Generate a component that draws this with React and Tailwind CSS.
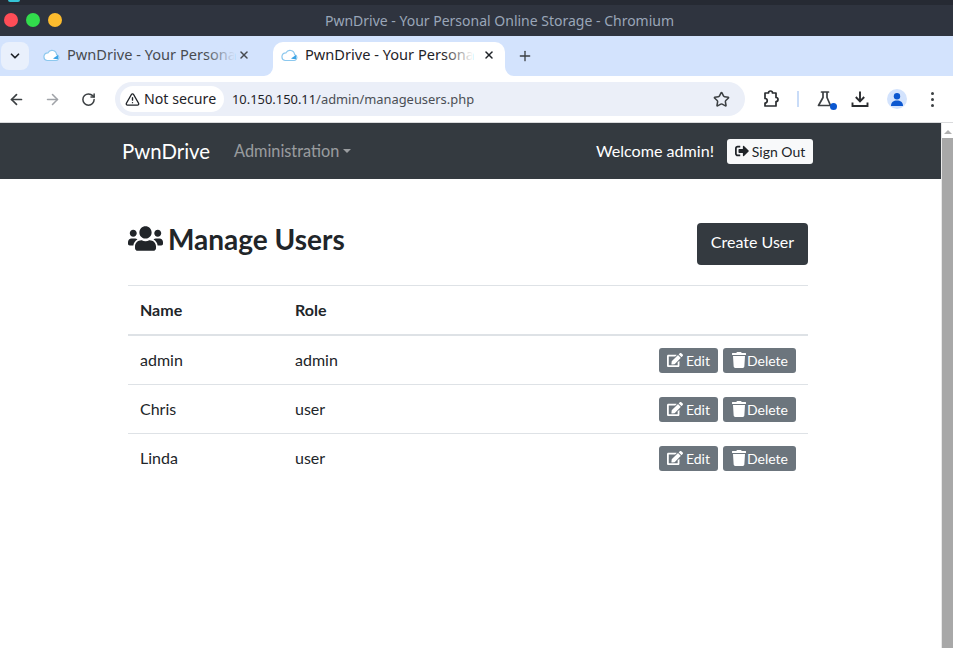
import React from "react";
import { FaUsers, FaEdit, FaTrash, FaSignOutAlt } from "react-icons/fa";
import { X, ChevronDown, Plus, ArrowLeft, ArrowRight, RotateCw, TriangleAlert, Star } from "lucide-react";

const ui = { fontFamily: '"Noto Sans", sans-serif' };
const lato = { fontFamily: 'Lato, sans-serif' };

function Cloud() {
  return (
    <svg width="17" height="14" viewBox="0 0 17 14" fill="none" className="shrink-0">
      <path d="M4 12.500h9a3 3 0 0 0 .6-5.900A4.600 4.600 0 0 0 5 4.800 3.900 3.900 0 0 0 4 12.500Z" fill="#fff" stroke="#8cc8ee" strokeWidth="1.2" />
      <path d="M10 10.500l5-3.500v4h-3" fill="#3ba4e6" />
    </svg>
  );
}

function Tab({ active }) {
  return (
    <div className={active ? "relative flex items-center h-[34px] w-[232px] mt-[6px] pb-[8px] pl-[8px] bg-white rounded-t-[10px] shrink-0" : "flex items-center h-[34px] w-[244px] mt-[6px] pb-[8px] pl-[14px] shrink-0"}>
      {active && (
        <svg width="9" height="9" viewBox="0 0 9 9" className="absolute -left-[9px] bottom-0"><path d="M9 0V9H0A9 9 0 0 0 9 0Z" fill="#fff" /></svg>
      )}
      {active && (
        <svg width="9" height="9" viewBox="0 0 9 9" className="absolute -right-[9px] bottom-0"><path d="M0 0V9H9A9 9 0 0 1 0 0Z" fill="#fff" /></svg>
      )}
      <Cloud />
      <span className={active ? "relative ml-[7px] w-[168px] shrink-0 whitespace-nowrap text-[14.6px] text-[#1f2328]" : "relative ml-[7px] w-[168px] shrink-0 whitespace-nowrap text-[14.6px] text-[#474b50]"}>
        PwnDrive - Your Persona
        <span className={active ? "absolute right-0 top-0 bottom-0 w-[30px] bg-gradient-to-r from-transparent to-white" : "absolute right-0 top-0 bottom-0 w-[30px] bg-gradient-to-r from-transparent to-[#d3e3fd]"} />
      </span>
      <X size={12} strokeWidth={3} className={active ? "ml-[10px] text-[#1f2328]" : "ml-[3px] text-[#474b50]"} />
    </div>
  );
}

function Row({ name, role }) {
  return (
    <div className="flex items-center h-[49px] border-b border-[#dee2e6] last:border-b-transparent px-[12px] text-[16px] text-[#212529]">
      <div className="w-[155px]">{name}</div>
      <div className="flex-1">{role}</div>
      <div className="flex gap-[5px]">
        <button className="flex items-center h-[25px] w-[59px] justify-center gap-[3px] rounded-[3px] bg-[#6c757d] text-white text-[14px]">
          <FaEdit size={16} />Edit
        </button>
        <button className="flex items-center h-[25px] w-[73px] justify-center rounded-[3px] bg-[#6c757d] text-white text-[14px]">
          <FaTrash size={16} />Delete
        </button>
      </div>
    </div>
  );
}

export default function App() {
  return (
    <div className="w-[953px] h-[648px] overflow-hidden flex flex-col bg-white">
      <div className="h-[36px] bg-[#2f343f] border-t-[5px] border-[#262a33] flex items-center relative" style={ui}>
        <span className="absolute left-[8px] -top-[5px] w-[12px] h-[2px] rounded-b-full bg-[#35c4d6]" />
        <div className="flex gap-[8px] ml-[4px] -mt-[2px]">
          <span className="w-[14px] h-[14px] rounded-full bg-[#ff4d57]" />
          <span className="w-[14px] h-[14px] rounded-full bg-[#32dc4c]" />
          <span className="w-[14px] h-[14px] rounded-full bg-[#fdbc2e]" />
        </div>
        <div className="flex-1 text-center text-[14px] text-[#9aa6b8] -mt-[1px]">
          <span className="ml-[-16px]">PwnDrive - Your Personal Online Storage - Chromium</span>
        </div>
      </div>

      <div className="h-[40px] bg-[#d3e3fd] flex" style={ui}>
        <div className="w-[28px] h-[28px] mt-[6px] ml-[1px] rounded-[8px] bg-[#e9f0fc] flex items-center justify-center shrink-0">
          <ChevronDown size={14} strokeWidth={3} className="text-[#1f2328]" />
        </div>
        <Tab />
        <Tab active />
        <Plus size={16} strokeWidth={2} className="text-[#3c4043] mt-[12px] ml-[12px]" />
      </div>

      <div className="h-[47px] bg-white border-b border-[#d9dadc] flex items-center" style={ui}>
        <ArrowLeft size={17} strokeWidth={2.4} className="ml-[8px] text-[#3c4043]" />
        <ArrowRight size={17} strokeWidth={2.2} className="ml-[19px] text-[#a0a3a8]" />
        <RotateCw size={15} strokeWidth={2.4} className="ml-[20px] text-[#3c4043]" />
        <div className="ml-[19px] w-[630px] h-[34px] rounded-full bg-[#ebeff8] flex items-center pl-[5px] pr-[15px]">
          <div className="h-[26px] w-[104px] bg-white rounded-full flex items-center pl-[5px] gap-[4px] text-[14.2px] text-[#1f2328]">
            <TriangleAlert size={15} strokeWidth={2.2} />
            <span>Not secure</span>
          </div>
          <span className="ml-[8px] mt-[1px] text-[12.9px] text-[#1f2328]">10.150.150.11<span className="text-[#4a4e55]">/admin/manageusers.php</span></span>
          <Star size={17} strokeWidth={2.2} className="ml-auto text-[#3c4043]" />
        </div>
        <svg width="18" height="18" viewBox="0 0 18 18" fill="none" stroke="#2a2d30" strokeWidth="1.700" strokeLinejoin="round" className="ml-[17px]">
          <path d="M3 3h3.500a2 2 0 0 1 4 0H14v4.500a2 2 0 0 1 0 4V16H3v-3a2 2 0 0 0 0-4.500Z" />
        </svg>
        <div className="ml-[17px] w-[1.5px] h-[16px] bg-[#c9dcf8]" />
        <div className="relative ml-[17px]">
          <svg width="18" height="18" viewBox="0 0 18 18" fill="none" stroke="#3c4043" strokeWidth="1.700" strokeLinejoin="round" strokeLinecap="round" className="block">
            <path d="M5.500 2h7M7 2v5.500L2.500 15.500h12L11 7.500V2" />
          </svg>
          <span className="absolute -right-[3px] -bottom-[2px] w-[7px] h-[7px] rounded-full bg-[#0b57d0]" />
        </div>
        <svg width="18" height="18" viewBox="0 0 18 18" fill="none" stroke="#2a2d30" strokeWidth="1.900" className="ml-[17px]">
          <path d="M9 1.500v9.500M4.800 7l4.200 4.300L13.200 7M1.500 12.500v3.500h15v-3.500" />
        </svg>
        <div className="ml-[18px] w-[20px] h-[20px] rounded-full bg-[#d3e3fd] flex items-center justify-center">
          <svg width="14" height="14" viewBox="0 0 14 14"><circle cx="7" cy="4.200" r="3.200" fill="#0b57d0" /><path d="M1 14c0-4 2.600-5.500 6-5.500s6 1.500 6 5.500Z" fill="#0b57d0" /></svg>
        </div>
        <div className="ml-[24px] flex flex-col gap-[3px]">
          <span className="w-[3px] h-[3px] rounded-full bg-[#3c4043]" />
          <span className="w-[3px] h-[3px] rounded-full bg-[#3c4043]" />
          <span className="w-[3px] h-[3px] rounded-full bg-[#3c4043]" />
        </div>
      </div>

      <div className="flex flex-1 min-h-0" style={lato}>
        <div className="flex-1 min-w-0">
          <nav className="h-[56px] bg-[#343a40] flex items-center pl-[122px] pr-[128px]">
            <span className="text-[20.4px] text-white">PwnDrive</span>
            <span className="ml-[24px] text-[16.3px] text-white/50">Administration</span>
            <span className="ml-[4px] border-x-[4.5px] border-t-[4.5px] border-x-transparent border-t-white/50" />
            <span className="ml-auto text-[16.1px] text-white">Welcome admin!</span>
            <button className="ml-[13px] h-[25px] w-[86px] flex items-center justify-center gap-[3px] rounded-[3px] bg-[#f8f9fa] text-[14px] text-[#212529]">
              <FaSignOutAlt size={14} />Sign Out
            </button>
          </nav>
          <main className="w-[680px] ml-[128px] pt-[44px]">
            <div className="flex justify-between items-start h-[63px] border-b border-[#dee2e6]">
              <h1 className="flex items-center gap-[5px] -mt-[2px] text-[28px] leading-[34px] font-bold text-[#212529]">
                <FaUsers size={35} />Manage Users
              </h1>
              <button className="h-[42px] w-[111px] pb-[4px] rounded-[4px] bg-[#343a40] text-[16px] text-white">Create User</button>
            </div>
            <div className="flex items-center h-[50px] border-b-2 border-[#dee2e6] px-[12px] text-[16px] font-bold text-[#212529]">
              <div className="w-[155px]">Name</div>
              <div>Role</div>
            </div>
            <Row name="admin" role="admin" />
            <Row name="Chris" role="user" />
            <Row name="Linda" role="user" />
          </main>
        </div>
        <div className="w-[12px] bg-white border-l border-[#e8e8e8] flex flex-col items-center shrink-0">
          <span className="mt-[7px] border-x-[4px] border-b-[4px] border-x-transparent border-b-[#b0b0b0]" />
          <div className="mt-[4px] w-[11px] flex-1 bg-[#a8a8a8]" />
        </div>
      </div>
    </div>
  );
}
